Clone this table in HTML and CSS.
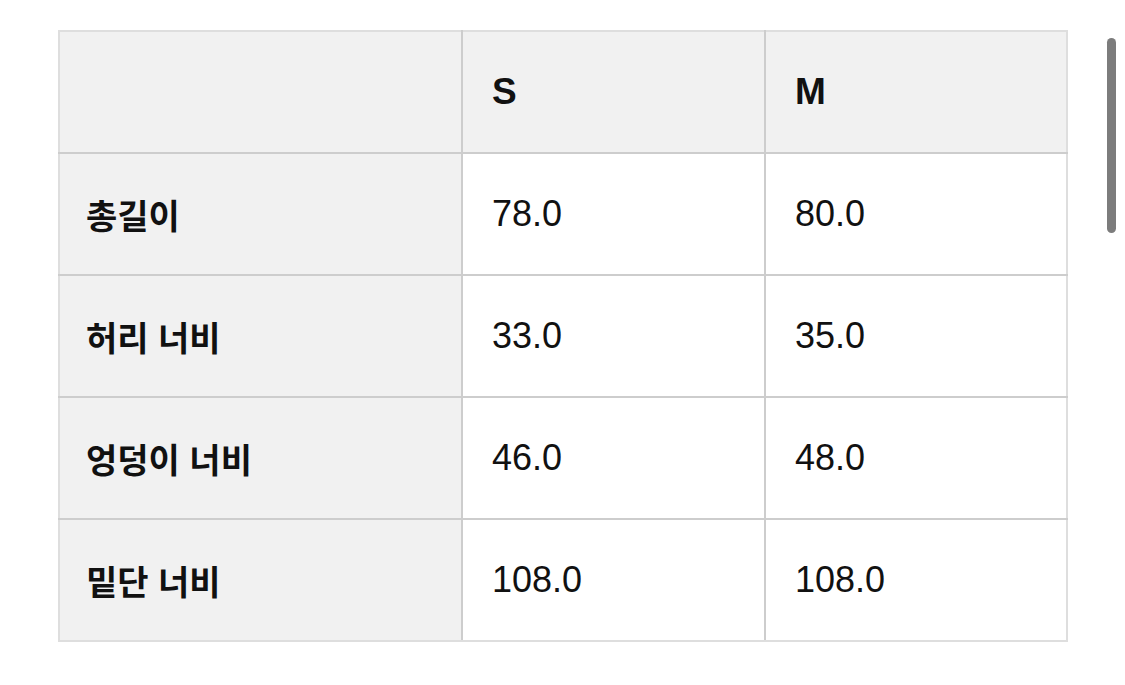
FILE: index.html
```html
<!DOCTYPE html>
<html lang="ko">
<head>
<meta charset="utf-8">
<link rel="stylesheet" href="styles.css">
</head>
<body>
<div class="page">
  <table class="size-table">
    <tr class="head">
      <th class="label"></th>
      <th>S</th>
      <th>M</th>
    </tr>
    <tr>
      <th class="label">총길이</th>
      <td>78.0</td>
      <td>80.0</td>
    </tr>
    <tr>
      <th class="label">허리 너비</th>
      <td>33.0</td>
      <td>35.0</td>
    </tr>
    <tr>
      <th class="label">엉덩이 너비</th>
      <td>46.0</td>
      <td>48.0</td>
    </tr>
    <tr>
      <th class="label">밑단 너비</th>
      <td>108.0</td>
      <td>108.0</td>
    </tr>
  </table>
  <div class="scrollbar"></div>
</div>
</body>
</html>
```
FILE: styles.css
```css
html, body {
  margin: 0;
  padding: 0;
  background: #ffffff;
}
.page {
  position: relative;
  width: 1125px;
  height: 685px;
  padding: 30px 0 0 58px;
  box-sizing: border-box;
}
.size-table {
  border-collapse: collapse;
  font-family: "Liberation Sans", "Noto Sans CJK KR", sans-serif;
  color: #111111;
  border: 2px solid #dedede;
}
.size-table th,
.size-table td {
  height: 122px;
  padding: 0 0 0 29px;
  text-align: left;
  vertical-align: middle;
  border: 2px solid #cdcdcd;
  box-sizing: border-box;
}
.size-table tr:first-child th { border-top-color: #dedede; }
.size-table tr:last-child th,
.size-table tr:last-child td { border-bottom-color: #dedede; }
.size-table th:first-child { border-left-color: #dedede; }
.size-table tr > :last-child { border-right-color: #dedede; }
.size-table th.label {
  width: 403px;
  background: #f1f1f1;
  font-family: "Noto Sans CJK KR", "Liberation Sans", sans-serif;
  font-size: 34px;
  font-weight: 700;
  padding-left: 26px;
}
.size-table tr.head th {
  background: #f1f1f1;
  font-size: 37px;
  font-weight: 700;
}
.size-table tr.head th:nth-child(2) { width: 303px; }
.size-table tr.head th:nth-child(3) { width: 302px; }
.size-table td {
  font-size: 36px;
  font-weight: 400;
  background: #ffffff;
}
.scrollbar {
  position: absolute;
  left: 1107px;
  top: 38px;
  width: 9px;
  height: 195px;
  border-radius: 5px;
  background: #7c7c7c;
}
```
